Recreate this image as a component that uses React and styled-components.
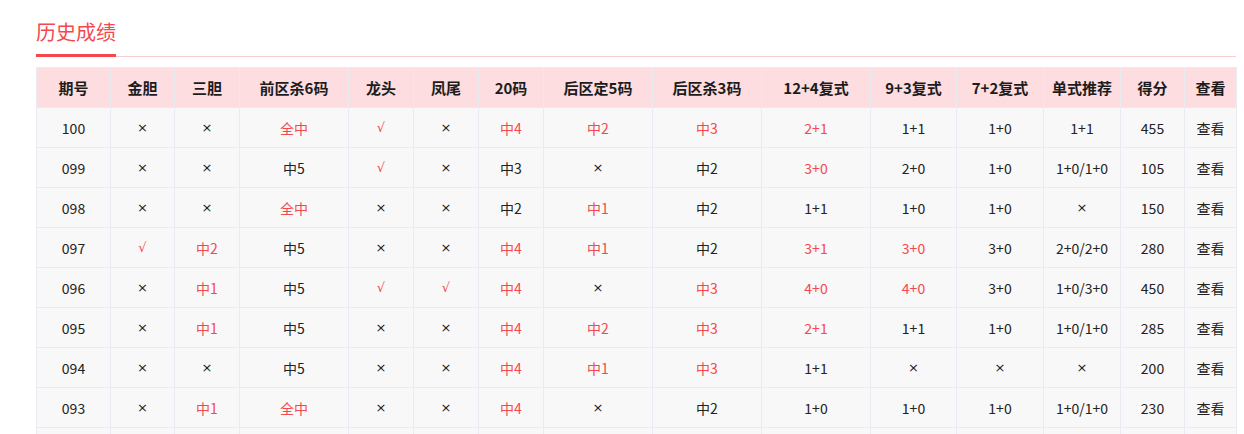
import styled, { createGlobalStyle } from "styled-components";

const GlobalStyle = createGlobalStyle`
  body {
    margin: 0;
    background: #fff;
    font-family: "Noto Sans CJK SC", "Noto Sans", sans-serif;
  }
`;

const Page = styled.div`
  width: 1200px;
  margin-left: 36px;
  padding-top: 16px;
`;

const TitleBar = styled.div`
  border-bottom: 1px solid #f7cfd0;
  margin-bottom: 10px;
`;

const Title = styled.h2`
  display: inline-block;
  margin: 0 0 -1px;
  padding-bottom: 6px;
  font-size: 20px;
  line-height: 32px;
  font-weight: 400;
  color: #f5484e;
  border-bottom: 3px solid #f5484e;
`;

const Table = styled.table`
  width: 1200px;
  table-layout: fixed;
  border-collapse: collapse;
  font-size: 14px;
  color: #222;
  text-align: center;
`;

const Head = styled.th`
  height: 39px;
  padding: 0;
  background: #fddde0;
  border: 1px solid #e9ebf2;
  font-size: 15px;
  font-weight: 700;
  color: #1c1c1c;
`;

const Cell = styled.td`
  height: 39px;
  padding: 0;
  background: #f8f8f8;
  border: 1px solid #e9ebf2;
  color: ${(p) => (p.$hit ? "#f5484e" : "#222")};
  font-size: ${(p) => (p.$mark ? "13px" : "14px")};
  font-family: ${(p) =>
    p.$mark ? '"DejaVu Sans", sans-serif' : '"Noto Sans CJK SC", sans-serif'};
`;

const widths = [74, 64, 65, 109, 65, 65, 65, 109, 109, 109, 86, 87, 77, 64, 52];

const headers = [
  "期号", "金胆", "三胆", "前区杀6码", "龙头", "凤尾", "20码", "后区定5码",
  "后区杀3码", "12+4复式", "9+3复式", "7+2复式", "单式推荐", "得分", "查看",
];

// "!" prefix marks a red (hit) value
const rows = [
  ["100", "×", "×", "!全中", "!√", "×", "!中4", "!中2", "!中3", "!2+1", "1+1", "1+0", "1+1", "455"],
  ["099", "×", "×", "中5", "!√", "×", "中3", "×", "中2", "!3+0", "2+0", "1+0", "1+0/1+0", "105"],
  ["098", "×", "×", "!全中", "×", "×", "中2", "!中1", "中2", "1+1", "1+0", "1+0", "×", "150"],
  ["097", "!√", "!中2", "中5", "×", "×", "!中4", "!中1", "中2", "!3+1", "!3+0", "3+0", "2+0/2+0", "280"],
  ["096", "×", "!中1", "中5", "!√", "!√", "!中4", "×", "!中3", "!4+0", "!4+0", "3+0", "1+0/3+0", "450"],
  ["095", "×", "!中1", "中5", "×", "×", "!中4", "!中2", "!中3", "!2+1", "1+1", "1+0", "1+0/1+0", "285"],
  ["094", "×", "×", "中5", "×", "×", "!中4", "!中1", "!中3", "1+1", "×", "×", "×", "200"],
  ["093", "×", "!中1", "!全中", "×", "×", "!中4", "×", "中2", "1+0", "1+0", "1+0", "1+0/1+0", "230"],
  ["092", "×", "×", "中5", "×", "×", "中3", "!中1", "中2", "1+0", "1+0", "1+0", "1+0/1+0", "120"],
];

export default function App() {
  return (
    <Page>
      <GlobalStyle />
      <TitleBar>
        <Title>历史成绩</Title>
      </TitleBar>
      <Table>
        <colgroup>
          {widths.map((w, i) => (
            <col key={i} style={{ width: w }} />
          ))}
        </colgroup>
        <thead>
          <tr>
            {headers.map((h) => (
              <Head key={h}>{h}</Head>
            ))}
          </tr>
        </thead>
        <tbody>
          {rows.map((r) => (
            <tr key={r[0]}>
              {r.map((v, i) => {
                const hit = v.startsWith("!");
                const text = hit ? v.slice(1) : v;
                return (
                  <Cell key={i} $hit={hit} $mark={text === "×" || text === "√"}>
                    {text}
                  </Cell>
                );
              })}
              <Cell>查看</Cell>
            </tr>
          ))}
        </tbody>
      </Table>
    </Page>
  );
}
